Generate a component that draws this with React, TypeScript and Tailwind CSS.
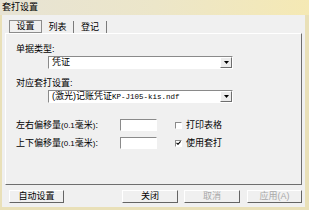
const font = { fontFamily: '"Liberation Sans", "Noto Sans CJK SC", sans-serif' };
const mono = { fontFamily: '"Liberation Mono", monospace' };

function Combo({ children }: { children: React.ReactNode }) {
  return (
    <div className="flex h-[13px] w-[185px] border border-t-[#8a8a8a] border-l-[#8a8a8a] border-r-white border-b-white bg-white">
      <div className="flex-1 pl-[3px] text-[9px] leading-[11px] text-black truncate">{children}</div>
      <div className="flex w-[12px] items-center justify-center border border-t-white border-l-white border-r-[#6e6e6e] border-b-[#6e6e6e] bg-[#ececec]">
        <svg width="5" height="3" viewBox="0 0 5 3">
          <path d="M0 0h5L2.5 3z" fill="#000" />
        </svg>
      </div>
    </div>
  );
}

function Field() {
  return (
    <div className="h-[12px] w-[37px] border border-t-[#8a8a8a] border-l-[#8a8a8a] border-r-white border-b-white bg-white" />
  );
}

function Check({ checked, label }: { checked?: boolean; label: string }) {
  return (
    <div className="flex items-center gap-[4px]">
      <div className="flex h-[7px] w-[7px] items-center justify-center border border-t-[#8a8a8a] border-l-[#8a8a8a] border-r-white border-b-white bg-white">
        {checked && (
          <svg width="5" height="4" viewBox="0 0 5 4">
            <path d="M0.5 1.8L2 3.3L4.6 0.4" stroke="#000" strokeWidth="1.1" fill="none" />
          </svg>
        )}
      </div>
      <span className="text-[9px] leading-[11px] text-black">{label}</span>
    </div>
  );
}

function Btn({ label, disabled, w }: { label: string; disabled?: boolean; w: string }) {
  return (
    <div
      className={`flex h-[13px] ${w} items-center justify-center border border-t-white border-l-white border-r-[#646464] border-b-[#646464] bg-[#f0f0f0] text-[9px] leading-[11px] ${
        disabled ? 'text-[#a8a8a8]' : 'text-black'
      }`}
    >
      {label}
    </div>
  );
}

export default function App() {
  return (
    <div className="flex h-[210px] w-[309px] flex-col bg-[#e9e0b8]" style={font}>
      <div className="flex h-[15px] items-center bg-gradient-to-r from-[#e7e3d4] via-[#ece6c9] to-[#f5e9b4] pl-[2px] text-[9px] text-black">
        套打设置
      </div>

      <div className="mb-[3px] ml-[2px] mr-[4px] flex flex-1 flex-col bg-[#f0f0f0]">
        <div className="flex h-[18px] items-end pl-[7px]">
          <div className="flex h-[13px] w-[33px] items-center justify-center border border-[#8c8c8c] bg-[#f0f0f0] text-[9px] leading-[11px] text-black">
            设置
          </div>
          <div className="flex h-[12px] w-[32px] items-center justify-center border-r border-[#7a7a7a] text-[9px] leading-[11px] text-black">
            列表
          </div>
          <div className="flex h-[12px] w-[33px] items-center justify-center border-r border-[#7a7a7a] text-[9px] leading-[11px] text-black">
            登记
          </div>
        </div>

        <div className="mx-[3px] flex h-[152px] flex-col border border-t-white border-l-white border-r-[#6e6e6e] border-b-[#6e6e6e] pl-[10px] pt-[10px]">
          <div className="text-[9px] leading-[11px] text-black">单据类型:</div>
          <div className="ml-[32px] mt-[1px]">
            <Combo>凭证</Combo>
          </div>
          <div className="mt-[9px] text-[9px] leading-[11px] text-black">对应套打设置:</div>
          <div className="ml-[32px] mt-[1px]">
            <Combo>
              (激光)记账凭证
              <span className="text-[7.5px]" style={mono}>KP-J105-kis.ndf</span>
            </Combo>
          </div>

          <div className="mt-[16px] flex flex-col gap-[6px]">
            <div className="flex items-center">
              <div className="w-[104px] text-[9px] leading-[11px] text-black">
                左右偏移量<span className="text-[8px]">(0.1</span>毫米<span className="text-[8px]">)</span>:
              </div>
              <Field />
              <div className="ml-[18px]">
                <Check label="打印表格" />
              </div>
            </div>
            <div className="flex items-center">
              <div className="w-[104px] text-[9px] leading-[11px] text-black">
                上下偏移量<span className="text-[8px]">(0.1</span>毫米<span className="text-[8px]">)</span>:
              </div>
              <Field />
              <div className="ml-[18px]">
                <Check checked label="使用套打" />
              </div>
            </div>
          </div>
        </div>

        <div className="mt-[5px] flex pl-[7px]">
          <Btn label="自动设置" w="w-[55px]" />
          <div className="ml-[58px]">
            <Btn label="关闭" w="w-[56px]" />
          </div>
          <div className="ml-[6px]">
            <Btn label="取消" disabled w="w-[56px]" />
          </div>
          <div className="ml-[7px]">
            <Btn label="应用(A)" disabled w="w-[55px]" />
          </div>
        </div>
      </div>
    </div>
  );
}
